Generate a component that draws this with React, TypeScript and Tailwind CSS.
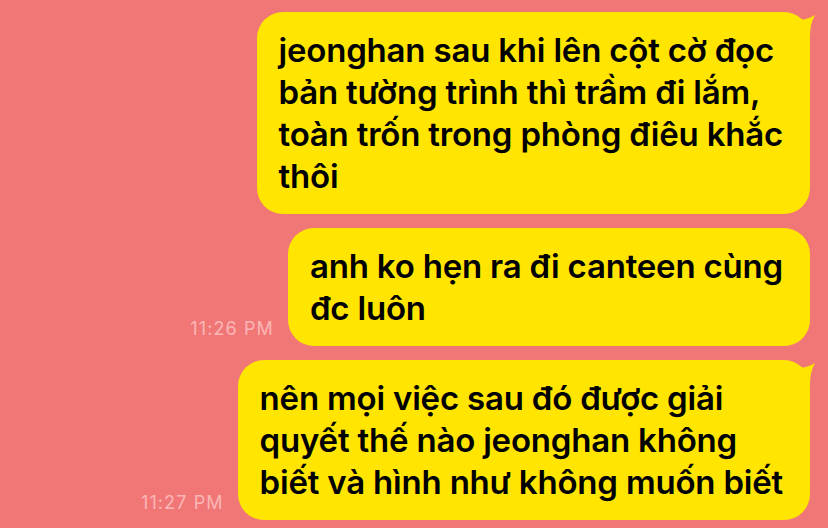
import { FC } from 'react';

interface Message {
  lines: string[];
  time?: string;
  tail?: boolean;
}

const messages: Message[] = [
  {
    lines: ['jeonghan sau khi lên cột cờ đọc', 'bản tường trình thì trầm đi lắm,', 'toàn trốn trong phòng điêu khắc', 'thôi'],
    tail: true,
  },
  { lines: ['anh ko hẹn ra đi canteen cùng', 'đc luôn'], time: '11:26 PM' },
  {
    lines: ['nên mọi việc sau đó được giải', 'quyết thế nào jeonghan không', 'biết và hình như không muốn biết'],
    time: '11:27 PM',
    tail: true,
  },
];

const Tail: FC = () => (
  <svg className="absolute right-[-6px] top-0" width="20" height="30" viewBox="0 0 20 30">
    <path d="M0 12 L3 8 Q12 7.5 19 3 Q14 12 14 24 L0 24 Z" fill="#ffe500" />
  </svg>
);

const Bubble: FC<{ msg: Message }> = ({ msg }) => (
  <div className="flex items-end gap-[14px]">
    {msg.time && (
      <span className="mb-[8px] text-[18px] leading-none tracking-[1.1px] text-[#fbb6b6]">{msg.time}</span>
    )}
    <div className="relative rounded-[26px] bg-[#ffe500] pl-[22px] pr-[27px] pt-[17px] pb-[17px]">
      {msg.tail && <Tail />}
      {msg.lines.map((l, i) => (
        <div key={i} className="whitespace-nowrap text-[33px] font-semibold leading-[42px] tracking-[-0.2px] text-black">
          {l}
        </div>
      ))}
    </div>
  </div>
);

export default function App() {
  return (
    <div
      className="flex h-[528px] w-[828px] flex-col items-end gap-[14px] overflow-hidden bg-[#f17676] pr-[18px] pt-[12px]"
      style={{ fontFamily: 'Inter, "Noto Sans", sans-serif' }}
    >
      {messages.map((m, i) => (
        <Bubble key={i} msg={m} />
      ))}
    </div>
  );
}
